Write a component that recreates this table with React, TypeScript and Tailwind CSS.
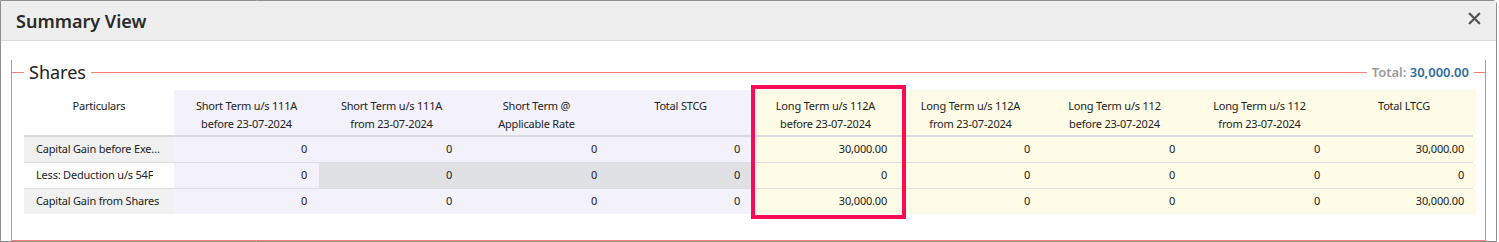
import { X } from "lucide-react";

const stcgHeaders = [
  ["Short Term u/s 111A", "before 23-07-2024"],
  ["Short Term u/s 111A", "from 23-07-2024"],
  ["Short Term @", "Applicable Rate"],
  ["Total STCG", ""],
];

const ltcgHeaders = [
  ["Long Term u/s 112A", "before 23-07-2024"],
  ["Long Term u/s 112A", "from 23-07-2024"],
  ["Long Term u/s 112", "before 23-07-2024"],
  ["Long Term u/s 112", "from 23-07-2024"],
  ["Total LTCG", ""],
];

const rows = [
  {
    label: "Capital Gain before Exemption",
    values: ["0", "0", "0", "0", "30,000.00", "0", "0", "0", "30,000.00"],
    striped: true,
    disabled: [] as number[],
  },
  {
    label: "Less: Deduction u/s 54F",
    values: ["0", "0", "0", "0", "0", "0", "0", "0", "0"],
    striped: false,
    disabled: [1, 2, 3],
  },
  {
    label: "Capital Gain from Shares",
    values: ["0", "0", "0", "0", "30,000.00", "0", "0", "0", "30,000.00"],
    striped: true,
    disabled: [] as number[],
  },
];

const gridCols =
  "grid grid-cols-[150px_145px_145px_145px_143px_147px_143px_145px_145px_144px]";

export default function App() {
  return (
    <div
      className="w-[1497px] h-[242px] bg-white text-[#222] overflow-hidden"
      style={{ fontFamily: '"Noto Sans", "Open Sans", sans-serif' }}
    >
      <div className="h-full border border-[#8e8e8e] rounded-tr-[4px] bg-white">
        {/* Header */}
        <div className="h-[40px] bg-[#eeeeee] border-b border-[#dcdcdc] pl-[15px] pr-[12px] flex items-center justify-between">
          <h1 className="text-[18px] font-semibold text-[#2a2a2a] pt-[2px]">Summary View</h1>
          <button className="text-[#555] mb-[4px]">
            <X className="w-[19px] h-[19px]" strokeWidth={3} />
          </button>
        </div>

        {/* Fieldset */}
        <div className="px-[10px] pt-[31px]">
          <div className="border-x border-b border-[#f28275] px-[12px] pb-[26px]">
            <div className="-mt-[12px] h-[24px] -mx-[12px] flex items-center">
              <div className="w-[12px] h-px bg-[#f28275]" />
              <span className="px-[5px] text-[18px] leading-[24px] text-[#222]">Shares</span>
              <div className="flex-1 h-px bg-[#f28275]" />
              <span className="px-[5px] text-[13px] font-semibold leading-[24px]">
                <span className="text-[#9a9a9a]">Total: </span>
                <span className="text-[#2f6f9f]">30,000.00</span>
              </span>
              <div className="w-[11px] h-px bg-[#f28275]" />
            </div>

            <div className="relative mt-[6px] text-[11px] tracking-[-0.2px]">
              {/* Header row */}
              <div className={`${gridCols} border-b-2 border-[#dadbde]`}>
                <div className="h-[45px] bg-white text-center pt-[7px] leading-[18px]">Particulars</div>
                {stcgHeaders.map((h, i) => (
                  <div key={i} className="h-[45px] bg-[#f3f1fa] text-center pt-[7px] leading-[18px]">
                    <div>{h[0]}</div>
                    <div>{h[1]}</div>
                  </div>
                ))}
                {ltcgHeaders.map((h, i) => (
                  <div key={i} className="h-[45px] bg-[#fefce6] text-center pt-[7px] leading-[18px]">
                    <div>{h[0]}</div>
                    <div>{h[1]}</div>
                  </div>
                ))}
              </div>

              {/* Body rows */}
              {rows.map((row, r) => (
                <div
                  key={r}
                  className={`${gridCols} ${r < rows.length - 1 ? "border-b border-[#dcdde1]" : ""}`}
                >
                  <div
                    className={`h-[25px] flex items-center pl-[12px] pr-[12px] ${
                      row.striped ? "bg-[#f1f1f1]" : "bg-white"
                    }`}
                  >
                    <span className="truncate">{row.label}</span>
                  </div>
                  {row.values.map((v, c) => (
                    <div
                      key={c}
                      className={`h-[25px] flex items-center justify-end pr-[12px] ${
                        row.disabled.includes(c)
                          ? "bg-[#dfe1e5]"
                          : c < 4
                            ? "bg-[#f3f1fa]"
                            : "bg-[#fefce6]"
                      }`}
                    >
                      {v}
                    </div>
                  ))}
                </div>
              ))}

              {/* Highlight annotation */}
              <div className="absolute left-[727px] -top-[5px] w-[155px] h-[134px] border-4 border-[#ff0a55] pointer-events-none" />
            </div>
          </div>
        </div>
      </div>
    </div>
  );
}
